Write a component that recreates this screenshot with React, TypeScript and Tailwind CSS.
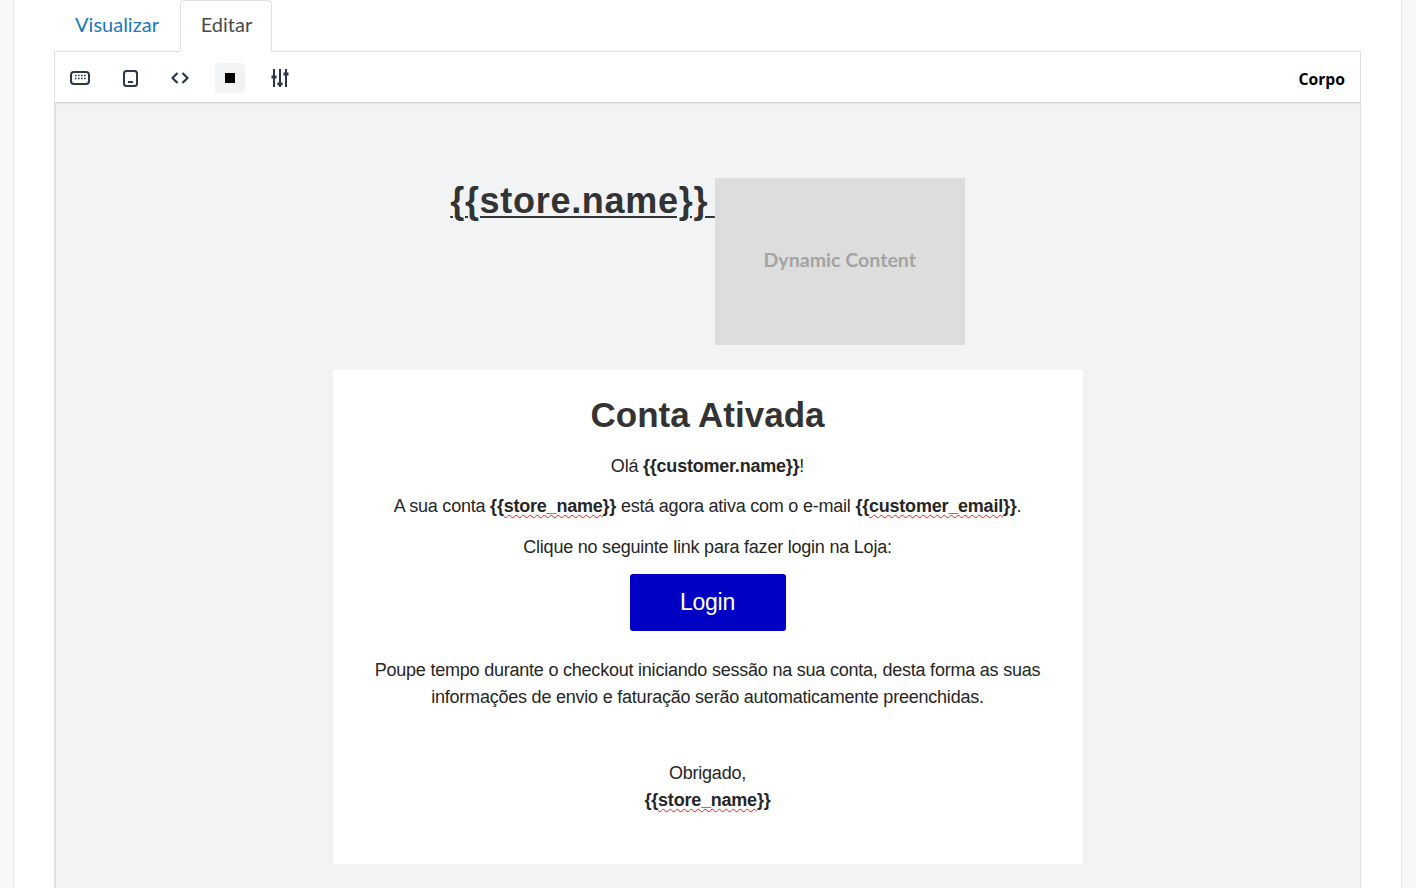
import React from "react";

const Sq = ({ children }: { children: React.ReactNode }) => (
  <span className="underline decoration-wavy decoration-[#ff1a1a] decoration-1 underline-offset-[2px] [text-decoration-skip-ink:none]">{children}</span>
);

const Icon = ({ children, active }: { children: React.ReactNode; active?: boolean }) => (
  <div className={`flex h-[30px] w-[30px] items-center justify-center rounded ${active ? "bg-[#f2f3f5]" : ""}`}>{children}</div>
);

export default function App() {
  return (
    <div className="h-[888px] overflow-hidden bg-[#f7f8fa] px-[13px] font-['Liberation_Sans',sans-serif] text-[#333]">
      <div className="h-full w-[1389px] border-x border-[#e8e9ed] bg-white px-[40px]">
        <div className="flex h-[52px] font-['Lato',sans-serif] text-[20px]">
          <div className="flex h-[52px] w-[126px] items-center justify-center pb-[4px] text-[#1a78b8]">Visualizar</div>
          <div className="z-10 flex h-[52px] w-[92px] items-center justify-center rounded-t border border-[#dfe1e6] border-b-white pb-[4px] pl-[1px] text-[#4a4a4a]">Editar</div>
        </div>
        <div className="-mt-px h-[860px] border border-[#dfe1e6] bg-[#f2f3f5]">
          <div className="flex h-[51px] items-center justify-between border-b border-[#d5d7dc] bg-white pl-[10px] pr-[15px] pt-[2px] shadow-[0_1px_1px_rgba(0,0,0,0.05)]">
            <div className="flex items-center gap-[20px] text-[#2b3648]">
              <Icon>
                <svg width="20" height="14" viewBox="0 0 20 14" fill="none">
                  <rect x="1" y="1" width="18" height="12" rx="3" stroke="currentColor" strokeWidth="2" />
                  <path d="M5 4.5h1.6M8 4.5h1.6M11 4.5h1.6M14 4.5h1.6M5 7.5h1.6M8 7.5h1.6M11 7.5h1.6M14 7.5h1.6" stroke="currentColor" strokeWidth="1.6" />
                </svg>
              </Icon>
              <Icon>
                <svg width="15" height="17" viewBox="0 0 15 17" fill="none">
                  <rect x="1" y="1" width="13" height="15" rx="2.5" stroke="currentColor" strokeWidth="2" />
                  <path d="M5 12h5" stroke="currentColor" strokeWidth="2" />
                </svg>
              </Icon>
              <Icon>
                <svg width="18" height="12" viewBox="0 0 18 12" fill="none">
                  <path d="M6.5 1 1.5 6l5 5M11.5 1l5 5-5 5" stroke="currentColor" strokeWidth="2.2" />
                </svg>
              </Icon>
              <Icon active>
                <div className="h-[10px] w-[10px] bg-black" />
              </Icon>
              <Icon>
                <svg width="18" height="18" viewBox="0 0 18 18" fill="none">
                  <path d="M3 0v18M9 0v18M15 0v18" stroke="currentColor" strokeWidth="2" />
                  <path d="M0.5 8h5M6.5 15h5M12.5 5h5" stroke="currentColor" strokeWidth="3" />
                </svg>
              </Icon>
            </div>
            <div className="pt-[3px] font-['Open_Sans',sans-serif] text-[15.7px] font-bold leading-none text-black">Corpo</div>
          </div>
          <div className="flex h-[809px] flex-col items-center border-x border-l-[#dfe1e6] border-r-transparent pt-[75px]">
            <div className="flex h-[167px] items-start justify-center">
              <div className="mt-[2px] whitespace-pre text-[36px] font-bold leading-[42px] tracking-[0.7px] underline decoration-2 underline-offset-[3px] [word-spacing:-4px]">{"{{store.name}} "}</div>
              <div className="flex h-[167px] w-[250px] items-center justify-center bg-[#dddddd] pb-[4px] font-['Lato',sans-serif] text-[19.6px] font-bold text-[#a3a3a3]">Dynamic Content</div>
            </div>
            <div className="mt-[25px] h-[494px] w-[750px] bg-white pt-[24px] text-center text-[18px] leading-[27px] tracking-[-0.22px] text-[#262626]">
              <h1 className="text-[35px] font-bold leading-[42px] tracking-normal text-[#333]">Conta Ativada</h1>
              <p className="mt-[17px]">Olá <b>{"{{"}customer.name{"}}"}</b>!</p>
              <p className="mt-[13px]">A sua conta <b>{"{{"}<Sq>store_name</Sq>{"}}"}</b> está agora ativa com o e-mail <b>{"{{"}<Sq>customer_email</Sq>{"}}"}</b>.</p>
              <p className="mt-[14px]">Clique no seguinte link para fazer login na Loja:</p>
              <div className="mt-[13px] flex justify-center">
                <div className="flex h-[57px] w-[156px] items-center justify-center rounded-[3px] bg-[#0000c4] text-[23px] tracking-[-0.3px] text-white">Login</div>
              </div>
              <p className="mx-auto mt-[26px] w-[680px]">Poupe tempo durante o checkout iniciando sessão na sua conta, desta forma as suas informações de envio e faturação serão automaticamente preenchidas.</p>
              <p className="mt-[49px]">Obrigado,<br /><b>{"{{"}<Sq>store_name</Sq>{"}}"}</b></p>
            </div>
          </div>
        </div>
      </div>
    </div>
  );
}
